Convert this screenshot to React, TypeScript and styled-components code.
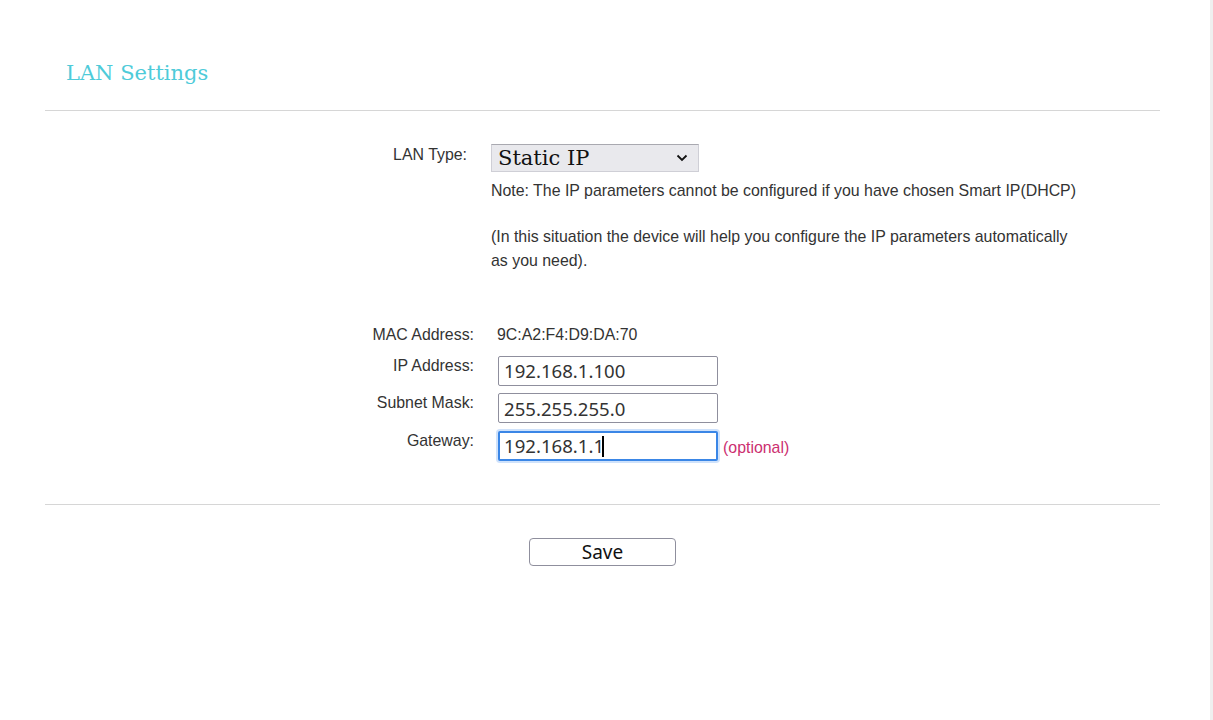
import React from "react";
import styled, { createGlobalStyle, css } from "styled-components";

const GlobalStyle = createGlobalStyle`
  html, body {
    margin: 0;
    padding: 0;
    background: #ffffff;
  }
  body {
    font-family: "Liberation Sans", Arial, sans-serif;
    color: #333333;
  }
`;

const Page = styled.div`
  display: flex;
  min-height: 720px;
`;

const Main = styled.div`
  flex: 1;
  padding: 58px 50px 0 45px;
`;

const Edge = styled.div`
  width: 3px;
  background: #efefef;
`;

const Title = styled.h2`
  margin: 0;
  padding-left: 21px;
  font-family: "DejaVu Serif", serif;
  font-weight: normal;
  font-size: 21px;
  line-height: 30px;
  color: #4ecbd9;
`;

const Divider = styled.hr<{ $top: number }>`
  margin: ${(p) => p.$top}px 0 0;
  border: none;
  border-top: 1px solid #d6d6d6;
`;

const Section = styled.div<{ $top: number }>`
  margin-top: ${(p) => p.$top}px;
  display: flex;
  flex-direction: column;
  gap: 7.5px;
`;

const Row = styled.div<{ $label: number; $gap: number }>`
  display: grid;
  grid-template-columns: ${(p) => p.$label}px 1fr;
  column-gap: ${(p) => p.$gap}px;
  align-items: start;
`;

const Label = styled.div<{ $pad?: number }>`
  text-align: right;
  font-size: 15.9px;
  line-height: 20px;
  padding-top: ${(p) => p.$pad ?? 0}px;
  color: #333333;
`;

const Value = styled.div`
  font-size: 15.9px;
  line-height: 24px;
  color: #333333;
`;

const SelectBox = styled.div`
  width: 208px;
  height: 28px;
  box-sizing: border-box;
  border: 1px solid #cfcfd6;
  border-top-color: #a9a9b0;
  background: #e9e9ed;
  display: flex;
  align-items: center;
  justify-content: space-between;
  padding: 0 10px 0 6px;
  font-family: "DejaVu Serif", serif;
  font-size: 21px;
  color: #111111;
`;

const Note = styled.div`
  margin-top: 7px;
  width: 590px;
  font-size: 15.9px;
  line-height: 24px;
  color: #333333;

  p {
    margin: 0;
  }
  p + p {
    margin-top: 22px;
  }
`;

const focusRing = css`
  border: 2px solid #3a86e6;
  box-shadow: 0 0 0 2px #cfe2fb;
  padding: 0 4px;
`;

const Input = styled.input<{ $focus?: boolean }>`
  width: 220px;
  height: 30px;
  box-sizing: border-box;
  margin-left: 1px;
  border: 1px solid #8f8f9d;
  border-radius: 2px;
  padding: 0 5px;
  font-family: "Noto Sans", "Open Sans", sans-serif;
  font-size: 18.6px;
  color: #333333;
  outline: none;
  ${(p) => p.$focus && focusRing}
`;

const InputLine = styled.div`
  display: flex;
  align-items: center;
  gap: 5px;
`;

const CaretWrap = styled.div`
  position: relative;
  display: flex;
`;

const Caret = styled.span`
  position: absolute;
  left: 105px;
  top: 5px;
  width: 1.5px;
  height: 21px;
  background: #000000;
`;

const Hint = styled.span`
  font-size: 15.9px;
  color: #cc2f6f;
  padding-top: 4px;
`;

const Footer = styled.div`
  display: flex;
  justify-content: center;
  padding-top: 33px;
`;

const SaveButton = styled.button`
  width: 147px;
  height: 28px;
  box-sizing: border-box;
  border: 1px solid #8f8f9d;
  border-radius: 4px;
  background: #ffffff;
  font-family: "Noto Sans", "Open Sans", sans-serif;
  font-size: 19px;
  color: #111111;
  padding: 0;
  line-height: 26px;
`;

const Chevron = () => (
  <svg width="12" height="8" viewBox="0 0 12 8">
    <path d="M1.5 1.5 L6 6 L10.5 1.5" fill="none" stroke="#111" strokeWidth="1.8" />
  </svg>
);

const fields = [
  { label: "IP Address:", value: "192.168.1.100" },
  { label: "Subnet Mask:", value: "255.255.255.0" },
];

export default function App() {
  return (
    <>
      <GlobalStyle />
      <Page>
        <Main>
          <Title>LAN Settings</Title>
          <Divider $top={22} />

          <Section $top={33}>
            <Row $label={422} $gap={24}>
              <Label $pad={1}>LAN Type:</Label>
              <div>
                <SelectBox>
                  <span>Static IP</span>
                  <Chevron />
                </SelectBox>
                <Note>
                  <p>Note: The IP parameters cannot be configured if you have chosen Smart IP(DHCP)</p>
                  <p>
                    (In this situation the device will help you configure the IP parameters automatically
                    as you need).
                  </p>
                </Note>
              </div>
            </Row>
          </Section>

          <Section $top={50}>
            <Row $label={429} $gap={23} style={{ marginBottom: 1 }}>
              <Label $pad={2}>MAC Address:</Label>
              <Value>9C:A2:F4:D9:DA:70</Value>
            </Row>
            {fields.map((f) => (
              <Row key={f.label} $label={429} $gap={23}>
                <Label>{f.label}</Label>
                <Input defaultValue={f.value} />
              </Row>
            ))}
            <Row $label={429} $gap={23}>
              <Label>Gateway:</Label>
              <InputLine>
                <CaretWrap>
                  <Input $focus defaultValue="192.168.1.1" />
                  <Caret />
                </CaretWrap>
                <Hint>(optional)</Hint>
              </InputLine>
            </Row>
          </Section>

          <Divider $top={43} />
          <Footer>
            <SaveButton>Save</SaveButton>
          </Footer>
        </Main>
        <Edge />
      </Page>
    </>
  );
}
